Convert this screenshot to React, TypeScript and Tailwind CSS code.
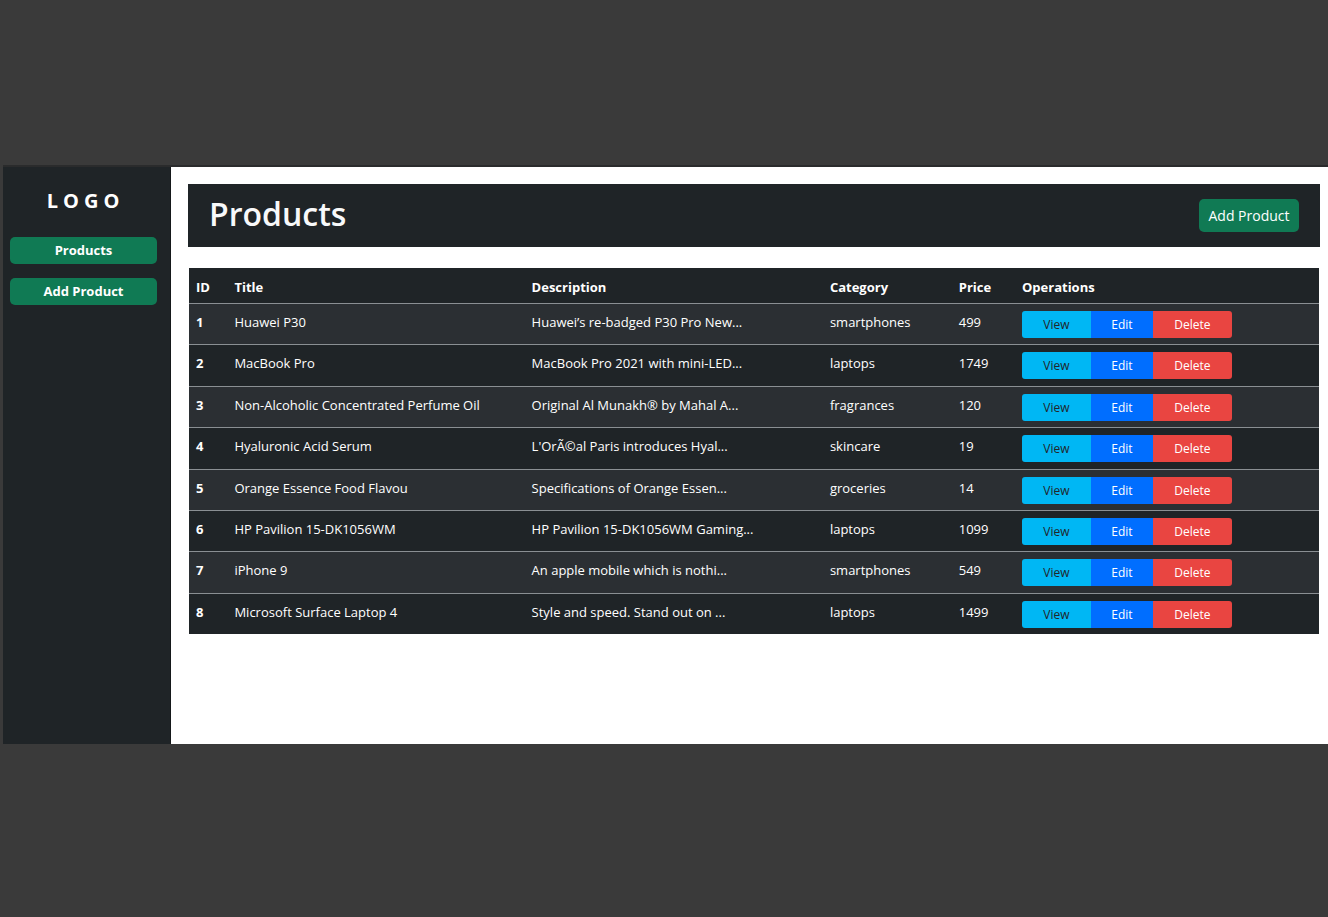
type Product = {
  id: number;
  title: string;
  description: string;
  category: string;
  price: number;
};

const products: Product[] = [
  { id: 1, title: "Huawei P30", description: "Huawei’s re-badged P30 Pro New...", category: "smartphones", price: 499 },
  { id: 2, title: "MacBook Pro", description: "MacBook Pro 2021 with mini-LED...", category: "laptops", price: 1749 },
  { id: 3, title: "Non-Alcoholic Concentrated Perfume Oil", description: "Original Al Munakh® by Mahal A...", category: "fragrances", price: 120 },
  { id: 4, title: "Hyaluronic Acid Serum", description: "L'OrÃ©al Paris introduces Hyal...", category: "skincare", price: 19 },
  { id: 5, title: "Orange Essence Food Flavou", description: "Specifications of Orange Essen...", category: "groceries", price: 14 },
  { id: 6, title: "HP Pavilion 15-DK1056WM", description: "HP Pavilion 15-DK1056WM Gaming...", category: "laptops", price: 1099 },
  { id: 7, title: "iPhone 9", description: "An apple mobile which is nothi...", category: "smartphones", price: 549 },
  { id: 8, title: "Microsoft Surface Laptop 4", description: "Style and speed. Stand out on ...", category: "laptops", price: 1499 },
];

const columns = [
  { name: "ID", width: "w-[3.4%]" },
  { name: "Title", width: "w-[26.3%]" },
  { name: "Description", width: "w-[26.4%]" },
  { name: "Category", width: "w-[11.4%]" },
  { name: "Price", width: "w-[5.6%]" },
  { name: "Operations", width: "w-[26.9%]" },
];

function Sidebar() {
  return (
    <aside className="w-[168px] shrink-0 border-r border-[#15181a] bg-[#1f2427] pl-[7px] pr-[13px] pt-5">
      <div className="pl-1 text-center text-xl leading-7 font-bold tracking-[5px] text-white">LOGO</div>
      <nav className="mt-[22px] flex flex-col gap-[14px]">
        {["Products", "Add Product"].map((label) => (
          <a
            key={label}
            href="#"
            className="rounded-[5px] bg-[#107a54] text-center text-[13px] leading-[27px] font-bold text-white"
          >
            {label}
          </a>
        ))}
      </nav>
    </aside>
  );
}

function ProductRow({ product }: { product: Product }) {
  return (
    <tr className="border-b border-[#8a8f93] align-top odd:bg-[#2b2f33] last:border-0">
      <th scope="row" className="px-[7px] pt-[7px] text-left font-bold">{product.id}</th>
      <td className="px-[7px] pt-[7px]">{product.title}</td>
      <td className="px-[7px] pt-[7px]">{product.description}</td>
      <td className="px-[7px] pt-[7px]">{product.category}</td>
      <td className="px-[7px] pt-[7px]">{product.price}</td>
      <td className="px-[7px] pt-[7px] pb-[6px]">
        <div className="flex text-xs leading-[27px]">
          <button type="button" className="w-[69px] rounded-l-[3px] bg-[#00b7f4] text-[#212529]">View</button>
          <button type="button" className="w-[62px] bg-[#006eff]">Edit</button>
          <button type="button" className="w-[79px] rounded-r-[3px] bg-[#e94541]">Delete</button>
        </div>
      </td>
    </tr>
  );
}

export default function App() {
  return (
    <div className="min-h-screen bg-[#3a3a3a] pt-[165px] pl-[3px] font-['Open_Sans','Noto_Sans',sans-serif]">
      <div className="flex border-t-2 border-[#2a2b2c]">
        <Sidebar />
        <main className="min-w-0 flex-1 bg-white pt-[17px] pr-2 pb-[110px] pl-[17px]">
          <header className="flex items-start justify-between bg-[#1f2427] px-[21px] py-[15px]">
            <h1 className="text-[32px] leading-[30px] font-semibold text-[#f8f9fa]">Products</h1>
            <button type="button" className="w-[100px] rounded-[5px] bg-[#107a54] text-sm leading-[33px] text-white">
              Add Product
            </button>
          </header>
          <div className="mt-[21px] px-px">
            <table className="h-[366px] w-full table-fixed border-collapse bg-[#1f2427] text-[13px] leading-[22px] text-white">
              <thead>
                <tr className="border-b border-[#8a8f93]">
                  {columns.map((column) => (
                    <th key={column.name} scope="col" className={`${column.width} px-[7px] pt-2 pb-[5px] text-left font-bold`}>
                      {column.name}
                    </th>
                  ))}
                </tr>
              </thead>
              <tbody>
                {products.map((product) => (
                  <ProductRow key={product.id} product={product} />
                ))}
              </tbody>
            </table>
          </div>
        </main>
      </div>
    </div>
  );
}
